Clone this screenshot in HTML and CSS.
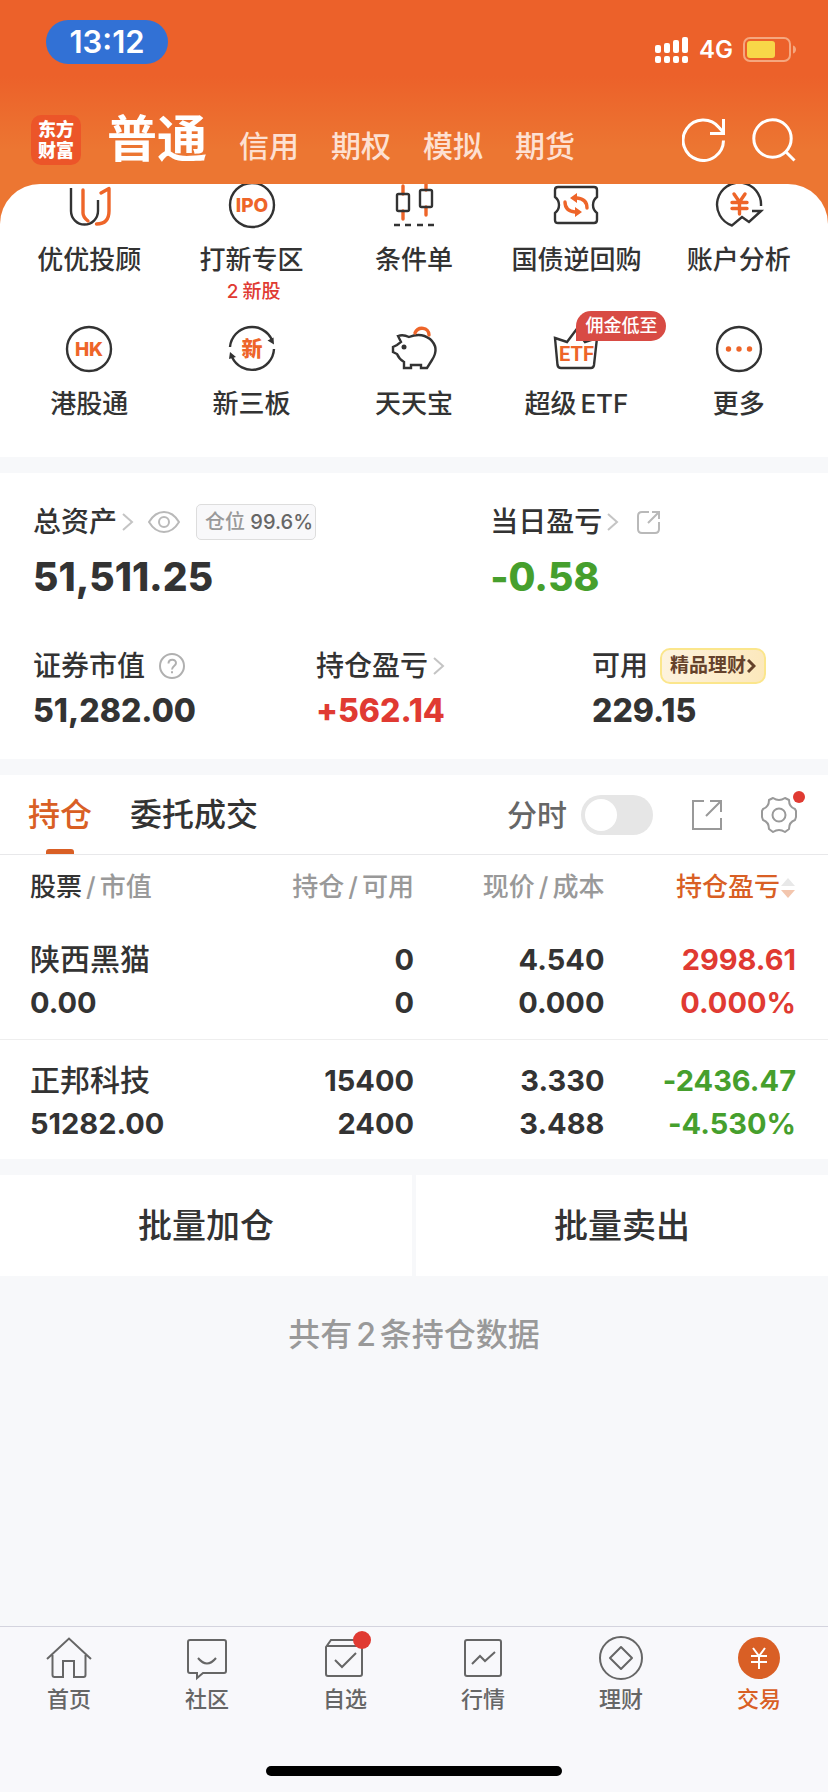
FILE: index.html
```html
<!DOCTYPE html>
<html lang="zh-CN">
<head>
<meta charset="utf-8">
<meta name="viewport" content="width=device-width, initial-scale=1">
<title>交易</title>
<link rel="stylesheet" href="styles.css">
</head>
<body>
<header class="header">
  <div class="status">
    <span class="clock">13:12</span>
    <div class="status-right">
      <svg width="34" height="26" viewBox="0 0 34 26" fill="#fff" aria-hidden="true">
        <rect x="0" y="8" width="6" height="8" rx="2"/><rect x="9" y="6" width="6" height="10" rx="2"/><rect x="18" y="3" width="6" height="13" rx="2"/><rect x="27" y="0" width="6" height="16" rx="2"/>
        <rect x="0" y="19" width="6" height="7" rx="2"/><rect x="9" y="19" width="6" height="7" rx="2"/><rect x="18" y="19" width="6" height="7" rx="2"/><rect x="27" y="19" width="6" height="7" rx="2"/>
      </svg>
      <span class="network">4G</span>
      <svg width="53" height="26" viewBox="0 0 53 26" aria-hidden="true">
        <rect x="1" y="1" width="46" height="23" rx="6" fill="none" stroke="#f5a77f" stroke-width="2"/>
        <rect x="4" y="4" width="28" height="17" rx="3" fill="#f8d748"/>
        <path d="M50 8.500c4 1 4 7 0 8z" fill="#f5a77f"/>
      </svg>
    </div>
  </div>
  <div class="topbar">
    <div class="logo"><span>东方</span><span>财富</span></div>
    <nav class="modes">
      <a class="mode mode-active" href="#">普通</a>
      <a class="mode" href="#">信用</a>
      <a class="mode" href="#">期权</a>
      <a class="mode" href="#">模拟</a>
      <a class="mode" href="#">期货</a>
    </nav>
    <button class="icon-btn" aria-label="刷新">
      <svg width="44" height="44" viewBox="0 0 44 44" fill="none" stroke="#fff" stroke-width="3"><path d="M41.500 22.500A20.200 20.200 0 1 1 37 9.500L41 14M41.500 1v14.500H28"/></svg>
    </button>
    <button class="icon-btn" aria-label="搜索">
      <svg width="44" height="44" viewBox="0 0 44 44" fill="none" stroke="#fff" stroke-width="3"><circle cx="20.500" cy="20.500" r="18.700"/><path d="M33.500 33.500l9 9"/></svg>
    </button>
  </div>
</header>

<main class="main">
  <div class="shortcut-wrap">
    <section class="shortcuts">
      <a class="shortcut" href="#">
        <svg class="s-icon" viewBox="0 0 46 46"><path d="M5 6v23a13.500 13.500 0 0 0 27 0V18"/><path class="o" d="M17 8v23q0 4 5 8M35 11l8-4.500V29c0 8-4 13-12.500 13"/></svg>
        <span class="s-label">优优投顾</span>
      </a>
      <a class="shortcut" href="#">
        <svg class="s-icon" viewBox="0 0 46 46"><circle cx="23" cy="23" r="22"/><text x="23" y="30" font-size="19">IPO</text></svg>
        <span class="s-label">打新专区</span>
        <span class="s-note"><span class="num">2</span>新股</span>
      </a>
      <a class="shortcut" href="#">
        <svg class="s-icon" viewBox="0 0 46 46"><path class="o" d="M12 4v8M12 29v8M35 0v8M35 25v8"/><rect x="6" y="12" width="12" height="17" rx="1.500"/><rect x="29" y="8" width="12" height="17" rx="1.500"/><path d="M3 43h6M14 43h6M26 43h6M37 43h6"/></svg>
        <span class="s-label">条件单</span>
      </a>
      <a class="shortcut" href="#">
        <svg class="s-icon" viewBox="0 0 46 46"><path d="M5 5h36q3 0 3 3v7q-4 3-4 8t4 8v7q0 3-3 3H5q-3 0-3-3v-7q4-3 4-8t-4-8V8q0-3 3-3z"/><path class="o" d="M24 16q10 1 10 10M22 30q-10-1-10-10"/><path class="of" d="M17 16l7-5v10zM29 30l-7 5V25z"/></svg>
        <span class="s-label">国债逆回购</span>
      </a>
      <a class="shortcut" href="#">
        <svg class="s-icon" viewBox="0 0 46 46"><path d="M45 24A22 22 0 1 0 16 43.500L26 35l7 5 12-11H36"/><path class="o" d="M18 12l5.500 8 5.500-8M16 20.500h15M16 26.500h15M23.500 20v12"/></svg>
        <span class="s-label">账户分析</span>
      </a>
      <a class="shortcut" href="#">
        <svg class="s-icon" viewBox="0 0 46 46"><circle cx="23" cy="23" r="22"/><text x="23" y="30" font-size="19">HK</text></svg>
        <span class="s-label">港股通</span>
      </a>
      <a class="shortcut" href="#">
        <svg class="s-icon" viewBox="0 0 46 46"><path d="M1 21A22 22 0 0 1 43 14M45 23A22 22 0 0 1 3 31"/><path class="df" d="M38.500 14.500l6-3 .5 7zM1 26l6 5-7 2z"/><text x="23" y="30" font-size="21">新</text></svg>
        <span class="s-label">新三板</span>
      </a>
      <a class="shortcut" href="#">
        <svg class="s-icon" viewBox="0 0 46 46"><path d="M10 16L7 10q5-2 11 1 12-5 21 2 10 9 2 21l-5 8h-6v-3H20v3h-7v-6q-5-3-7-8l-4-2v-5l4-2z"/><path class="o" d="M24 7c3-7 14-6 14 2"/><circle class="df" cx="13" cy="21" r="2.500"/></svg>
        <span class="s-label">天天宝</span>
      </a>
      <a class="shortcut" href="#">
        <span class="s-iconbox">
          <svg class="s-icon" viewBox="0 0 46 46"><path d="M2 12l12 4 9-12 9 12 12-4-3 27q-.5 3-3 3H8q-3 0-3.500-3z"/><text class="etf" x="23.500" y="35" font-size="20">ETF</text></svg>
          <span class="promo">佣金低至</span>
        </span>
        <span class="s-label">超级<span class="num num-end">ETF</span></span>
      </a>
      <a class="shortcut" href="#">
        <svg class="s-icon" viewBox="0 0 46 46"><circle cx="23" cy="23" r="22"/><circle class="of" cx="12.500" cy="23" r="2.700"/><circle class="of" cx="23" cy="23" r="2.700"/><circle class="of" cx="33.500" cy="23" r="2.700"/></svg>
        <span class="s-label">更多</span>
      </a>
    </section>
  </div>

  <section class="assets">
    <div class="asset-row asset-top">
      <div class="asset">
        <div class="a-label">总资产
          <svg class="chev" viewBox="0 0 12 18"><path d="M1 1l9 8-9 8"/></svg>
          <button class="plain eye" aria-label="隐藏金额"><svg width="32" height="22" viewBox="0 0 32 22" fill="none" stroke="#b9b9b9" stroke-width="2"><path d="M1 11Q7 1 16 1t15 10q-6 10-15 10T1 11z"/><circle cx="16" cy="11" r="5"/></svg></button>
          <span class="ratio">仓位 <b>99.6%</b></span>
        </div>
        <div class="a-value a-big">51,511.25</div>
      </div>
      <div class="asset">
        <div class="a-label">当日盈亏
          <svg class="chev" viewBox="0 0 12 18"><path d="M1 1l9 8-9 8"/></svg>
          <button class="plain share" aria-label="分享"><svg width="24" height="24" viewBox="0 0 24 24" fill="none" stroke="#b9b9b9" stroke-width="2"><path d="M12 2H5Q1 2 1 6v13q0 4 4 4h13q4 0 4-4v-7M11 13L22 2M15 2h7v7"/></svg></button>
        </div>
        <div class="a-value a-big down">-0.58</div>
      </div>
    </div>
    <div class="asset-row asset-bottom">
      <div class="asset">
        <div class="a-label">证券市值
          <svg class="help" viewBox="0 0 26 26"><circle cx="13" cy="13" r="12"/><path d="M9.500 10.500c0-5 7.500-5 7.500-.5 0 3-4 3-4 6.500M13 18.200v2"/></svg>
        </div>
        <div class="a-value">51,282.00</div>
      </div>
      <div class="asset">
        <div class="a-label">持仓盈亏
          <svg class="chev" viewBox="0 0 12 18"><path d="M1 1l9 8-9 8"/></svg>
        </div>
        <div class="a-value up">+562.14</div>
      </div>
      <div class="asset">
        <div class="a-label">可用
          <a class="wealth" href="#">精品理财<svg width="9" height="14" viewBox="0 0 9 14" fill="none" stroke="#65422b" stroke-width="3"><path d="M1 1l6 6-6 6"/></svg></a>
        </div>
        <div class="a-value">229.15</div>
      </div>
    </div>
  </section>

  <section class="positions">
    <div class="tabs">
      <button class="tab tab-active">持仓</button>
      <button class="tab">委托成交</button>
      <label class="switch-label" for="minute">分时</label>
      <input class="switch" type="checkbox" id="minute">
      <button class="plain tool" aria-label="分享"><svg width="32" height="32" viewBox="0 0 32 32" fill="none" stroke="#999" stroke-width="2"><path d="M13 2H2v28h28V19M15 17L30 2M19 2h11v11"/></svg></button>
      <button class="plain tool gear" aria-label="设置"><svg width="36" height="36" viewBox="0 0 36 36" fill="none" stroke="#999" stroke-width="2" stroke-linejoin="round"><path d="M8 3l4-2q6 4 12 0l4 2q0 7 6 9l1 2v6l-1 3q-6 2-6 9l-4 3q-6-4-12 0l-4-3q0-7-6-9l-1-3v-6l1-2q6-2 6-9z"/><circle cx="18" cy="18" r="6.500"/></svg><i class="dot"></i></button>
    </div>
    <table class="grid">
      <thead>
        <tr><th><span class="dark">股票</span><span class="num">/</span>市值</th><th>持仓<span class="num">/</span>可用</th><th>现价<span class="num">/</span>成本</th>
        <th><span class="sorted">持仓盈亏</span><svg class="sort" viewBox="0 0 16 22"><path d="M8 1l7 8H1z" fill="#e8e8e8"/><path d="M8 21l7-8H1z" fill="#f3c6ae"/></svg></th></tr>
      </thead>
      <tbody>
        <tr><td><span class="name">陕西黑猫</span><span>0.00</span></td><td><span>0</span><span>0</span></td><td><span>4.540</span><span>0.000</span></td><td class="up"><span>2998.61</span><span>0.000%</span></td></tr>
        <tr><td><span class="name">正邦科技</span><span>51282.00</span></td><td><span>15400</span><span>2400</span></td><td><span>3.330</span><span>3.488</span></td><td class="down"><span>-2436.47</span><span>-4.530%</span></td></tr>
      </tbody>
    </table>
  </section>

  <div class="batch">
    <button class="batch-btn">批量加仓</button>
    <button class="batch-btn">批量卖出</button>
  </div>
  <p class="count">共有<span class="num">2</span>条持仓数据</p>
</main>

<footer class="footer">
  <nav class="nav">
    <a class="nav-item" href="#"><svg class="n-icon" viewBox="0 0 46 44"><path d="M1 22L23 1.500 45 22M6.500 18v20q0 2 2 2H17V24h11v16h9.500q2 0 2-2V18"/></svg>首页</a>
    <a class="nav-item" href="#"><svg class="n-icon" viewBox="0 0 46 44"><path d="M6 3h34q2 0 2 2v29q0 2-2 2H19l-6 5v-5H6q-2 0-2-2V5q0-2 2-2zM14 21q9 11 18 0"/></svg>社区</a>
    <a class="nav-item" href="#"><svg class="n-icon" viewBox="0 0 46 44"><path d="M7 9h31q2 0 2 2v26q0 2-2 2H6q-2 0-2-2V10l5-7h28M5 9h34M13 23l7 7 14-14"/></svg><i class="n-dot"></i>自选</a>
    <a class="nav-item" href="#"><svg class="n-icon" viewBox="0 0 46 44"><rect x="5" y="3" width="36" height="36" rx="2"/><path d="M12 27l8-8 5 5 10-9"/></svg>行情</a>
    <a class="nav-item" href="#"><svg class="n-icon" viewBox="0 0 46 44"><circle cx="23" cy="21" r="21"/><path d="M23 10l11 11-11 11-11-11z" stroke-linejoin="round"/></svg>理财</a>
    <a class="nav-item nav-active" href="#"><svg class="n-icon" viewBox="0 0 46 44"><circle cx="23" cy="21" r="21" fill="#d95f25" stroke="none"/><path d="M17 11l6 8 6-8M15 19h16M15 25h16M23 19v13" stroke="#fff"/></svg>交易</a>
  </nav>
  <div class="home-bar"></div>
</footer>
</body>
</html>
```
FILE: styles.css
```css
* { box-sizing: border-box; }
body {
  margin: 0;
  min-height: 100vh;
  display: flex;
  flex-direction: column;
  background: #f7f8fa;
  color: #333;
  font-family: Inter, "Noto Sans CJK SC", sans-serif;
  font-weight: 500;
}
a { color: inherit; text-decoration: none; }
button { font: inherit; color: inherit; border: 0; padding: 0; background: none; }
svg { display: block; flex: none; }
.up { color: #e03a32; }
.down { color: #469f2d; }
.num { margin: 0 4px; }
.num-end { margin-right: 0; }

/* header */
.header {
  padding: 20px 32px 0 31px;
  height: 228px;
  background: linear-gradient(#ec612a 0, #ec612a 76px, #ec7632 150px, #ec7632 100%);
  color: #fff;
}
.status { display: flex; justify-content: space-between; padding-left: 15px; }
.clock {
  width: 122px;
  height: 44px;
  border-radius: 22px;
  background: #3271d5;
  font-size: 31px;
  font-weight: 600;
  line-height: 44px;
  text-align: center;
}
.status-right { display: flex; align-items: center; gap: 10px; padding-top: 16px; }
.network { font-size: 24px; line-height: 28px; font-weight: 600; }
.topbar { display: flex; align-items: center; gap: 26px; margin-top: 39px; }
.logo {
  display: flex;
  flex-direction: column;
  justify-content: center;
  width: 50px;
  height: 50px;
  border-radius: 10px;
  background: #ec5529;
  font-size: 18px;
  font-weight: 900;
  line-height: 21px;
  text-align: center;
}
.modes { display: flex; flex: 1; align-items: baseline; gap: 32px; padding-top: 6px; line-height: 60px; }
.mode { font-size: 30px; color: #fde0d2; }
.mode-active { font-size: 50px; font-weight: 700; color: #fff; }

/* shortcuts */
.shortcut-wrap {
  margin-top: -44px;
  border-radius: 40px 40px 0 0;
  background: #fff;
  overflow: hidden;
}
.shortcuts {
  display: grid;
  grid-template-columns: repeat(5, 1fr);
  row-gap: 22px;
  margin-top: -2px;
  padding: 0 8px 37px;
}
.shortcut { display: flex; flex-direction: column; align-items: center; }
.s-icon { width: 46px; height: 46px; fill: none; stroke: #333; stroke-width: 2.4; overflow: visible; }
.s-icon .o { stroke: #ee6529; stroke-width: 3.4; stroke-linecap: round; stroke-linejoin: round; }
.s-icon .of { fill: #ee6529; stroke: none; }
.s-icon .df { fill: #333; stroke: none; }
.s-icon text { fill: #ee6529; stroke: none; font-weight: 800; text-anchor: middle; }
.s-icon .etf { font-family: Roboto, sans-serif; font-weight: 700; }
.s-iconbox { position: relative; }
.promo {
  position: absolute;
  left: 23px;
  bottom: 31px;
  padding: 0 9px;
  border-radius: 15px 15px 15px 0;
  background: #d84b44;
  color: #fff;
  font-size: 18px;
  line-height: 30px;
  white-space: nowrap;
}
.s-label { margin-top: 16px; font-size: 26px; line-height: 32px; }
.s-note { margin-top: 4px; font-size: 19px; line-height: 24px; color: #e03a32; }

/* assets */
.assets { margin-top: 16px; padding: 31px 33px 29px; background: #fff; }
.asset-row { display: grid; }
.asset-top { grid-template-columns: 60% 40%; }
.asset-bottom { grid-template-columns: 283fr 276fr 203fr; margin-top: 50px; }
.a-label { display: flex; align-items: center; height: 36px; font-size: 28px; line-height: 36px; white-space: nowrap; }
.chev { width: 12px; height: 18px; margin-left: 5px; fill: none; stroke: #c4c4c4; stroke-width: 2; }
.plain { display: block; }
.eye { margin-left: 14px; }
.share { margin-left: 18px; }
.help { width: 26px; height: 26px; margin-left: 14px; fill: none; stroke: #b0b0b0; stroke-width: 2; }
.ratio {
  margin-left: 16px;
  padding: 0 2px 0 8px;
  border: 1px solid #ddd;
  border-radius: 5px;
  background: #f8f8fa;
  color: #999;
  font-size: 20px;
  line-height: 34px;
}
.ratio b { font-weight: 500; color: #666; }
.wealth {
  display: flex;
  align-items: center;
  gap: 1px;
  margin-left: 12px;
  padding: 0 8px;
  border: 2px solid #fbe68c;
  border-radius: 10px;
  background: linear-gradient(100deg, #fdf3df, #fce8bb);
  color: #65422b;
  font-size: 19px;
  font-weight: 700;
  line-height: 32px;
}
.a-value { margin-top: 8px; font-size: 32px; line-height: 38px; font-weight: 800; font-feature-settings: "calt" 0; }
.a-big { margin-top: 16px; font-size: 39px; line-height: 42px; }

/* positions */
.positions { margin-top: 16px; background: #fff; }
.tabs { display: flex; align-items: center; height: 80px; padding: 0 31px 0 28px; border-bottom: 1px solid #e8e8ea; }
.tab { position: relative; height: 79px; margin-right: 38px; font-size: 32px; line-height: 80px; }
.tab-active { color: #d95f25; }
.tab-active::after {
  content: "";
  position: absolute;
  left: 50%;
  bottom: 0;
  width: 28px;
  height: 5px;
  margin-left: -14px;
  border-radius: 3px 3px 0 0;
  background: #d95f25;
}
.switch-label { margin-left: auto; font-size: 30px; line-height: 40px; color: #666; }
.switch {
  appearance: none;
  width: 72px;
  height: 40px;
  margin: 0 0 0 14px;
  padding: 4px;
  border-radius: 20px;
  background: #e6e6e6;
}
.switch::before { content: ""; display: block; width: 32px; height: 32px; border-radius: 50%; background: #fff; }
.switch:checked::before { margin-left: 32px; }
.tool { margin-left: 38px; }
.gear { position: relative; }
.dot { position: absolute; top: -6px; right: -8px; width: 12px; height: 12px; border-radius: 50%; background: #e03a32; }

.grid { width: 100%; table-layout: fixed; border-collapse: collapse; text-align: right; }
.grid th, .grid td { padding: 0; }
.grid th:first-child, .grid td:first-child { width: 27%; padding-left: 30px; text-align: left; }
.grid th:last-child, .grid td:last-child { width: 27%; padding-right: 32px; }
.grid th { height: 64px; font-size: 26px; line-height: 32px; font-weight: 500; color: #999; white-space: nowrap; }
.grid .dark { color: #333; }
.grid .sorted { color: #d95f25; }
.sort { display: inline-block; width: 16px; height: 22px; vertical-align: -3px; }
.grid td { height: 120px; padding-top: 19px; font-size: 29px; line-height: 43px; font-weight: 700; font-feature-settings: "calt" 0; vertical-align: top; }
.grid td span { display: block; }
.grid .name { font-size: 30px; font-weight: 500; }
.grid tbody tr { border-bottom: 1px solid #eee; }
.grid tbody tr:last-child { border-bottom: 0; }

/* batch buttons */
.batch { display: grid; grid-template-columns: 1fr 1fr; gap: 4px; margin-top: 16px; }
.batch-btn { height: 101px; background: #fff; font-size: 34px; line-height: 44px; }
.count { margin: 38px 0; font-size: 32px; line-height: 42px; color: #999; text-align: center; }

/* bottom navigation */
.footer { margin-top: auto; padding-bottom: 16px; border-top: 1px solid #d4d4de; background: #f8f8fb; }
.nav { display: grid; grid-template-columns: repeat(6, 1fr); padding-top: 10px; }
.nav-item { position: relative; display: flex; flex-direction: column; align-items: center; font-size: 22px; line-height: 36px; color: #666; }
.nav-active { color: #d95f25; }
.n-icon { width: 46px; height: 44px; fill: none; stroke: #666; stroke-width: 2; overflow: visible; }
.n-dot { position: absolute; top: -6px; left: 50%; width: 18px; height: 18px; margin-left: 8px; border-radius: 50%; background: #e03a32; }
.home-bar { width: 296px; height: 10px; margin: 49px auto 0; border-radius: 5px; background: #000; }
```
